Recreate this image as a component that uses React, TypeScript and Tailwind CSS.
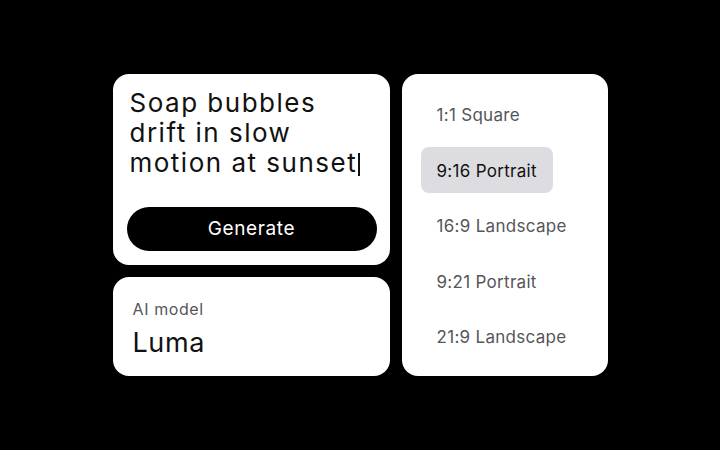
import React from "react";

const ratios = [
  "1:1 Square",
  "9:16 Portrait",
  "16:9 Landscape",
  "9:21 Portrait",
  "21:9 Landscape",
];

export default function App() {
  const selected = "9:16 Portrait";
  return (
    <div
      className="w-full h-[450px] bg-black flex items-center justify-center"
      style={{ fontFamily: "Inter, 'Noto Sans', sans-serif" }}
    >
      <div className="flex gap-3">
        <div className="w-[277px] flex flex-col gap-3">
          {/* prompt card */}
          <div className="h-[191px] bg-white rounded-2xl flex flex-col justify-between pl-[14px] pr-[13px] pt-[14px] pb-[14px]">
            <p className="pl-[3px] text-[26px] leading-[30px] text-[#111] tracking-[1.5px] whitespace-nowrap">
              Soap bubbles
              <br />
              drift in slow
              <br />
              motion at sunset
              <span className="inline-block w-[1.5px] h-[23px] bg-[#111] align-[-4px] ml-[1px]" />
            </p>
            <button className="h-[44px] w-full rounded-full bg-black text-white text-[19px] tracking-[0.6px]">
              Generate
            </button>
          </div>
          {/* model card */}
          <div className="h-[99px] bg-white rounded-2xl px-5 pt-[22px]">
            <div className="text-[16px] leading-5 text-[#55555a] tracking-[0.6px]">AI model</div>
            <div className="mt-[8px] text-[27px] leading-8 text-[#111] tracking-[0.6px]">Luma</div>
          </div>
        </div>
        {/* aspect ratio list */}
        <div className="w-[206px] h-[302px] bg-white rounded-2xl px-[19px] py-[17px] flex flex-col justify-between">
          {ratios.map((r) => (
            <div
              key={r}
              className={
                r === selected
                  ? "self-start h-[46px] px-4 pt-[4px] flex items-center rounded-lg bg-[#dddce0] text-[17px] tracking-[0.3px] text-[#111]"
                  : "self-start h-[46px] px-4 pt-[4px] flex items-center text-[17px] tracking-[0.3px] text-[#55555a]"
              }
            >
              {r}
            </div>
          ))}
        </div>
      </div>
    </div>
  );
}
